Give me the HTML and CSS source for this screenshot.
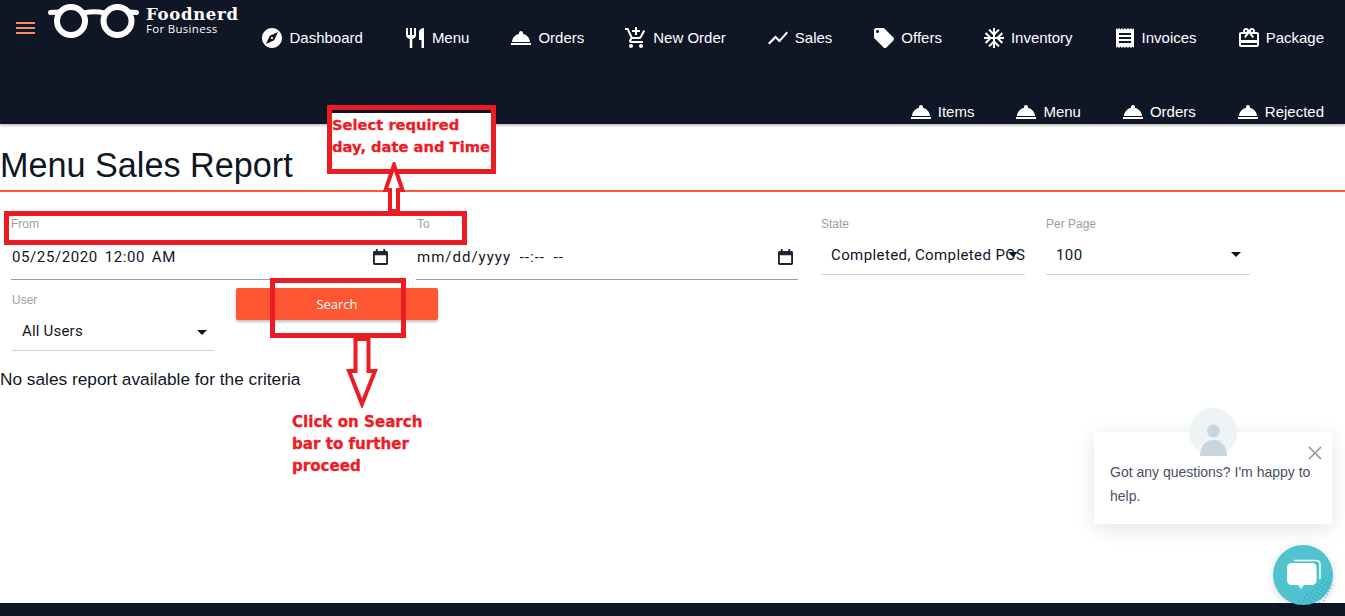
FILE: index.html
```html
<!DOCTYPE html>
<html lang="en">
<head>
<meta charset="utf-8">
<title>Menu Sales Report</title>
<link rel="stylesheet" href="styles.css">
</head>
<body>
<svg class="sprite" width="0" height="0" aria-hidden="true">
  <symbol id="i-explore" viewBox="0 0 24 24"><path d="M12 10.9c-.61 0-1.1.49-1.1 1.1s.49 1.1 1.1 1.1c.61 0 1.1-.49 1.1-1.1s-.49-1.1-1.1-1.1zM12 2C6.48 2 2 6.48 2 12s4.48 10 10 10 10-4.48 10-10S17.52 2 12 2zm2.19 12.19L6 18l3.81-8.19L18 6l-3.81 8.19z"/></symbol>
  <symbol id="i-menu" viewBox="0 0 24 24"><path d="M11 9H9V2H7v7H5V2H3v7c0 2.12 1.66 3.84 3.75 3.97V22h2.5v-9.03C11.34 12.84 13 11.12 13 9V2h-2v7zm5-3v8h2.5v8H21V2c-2.76 0-5 2.24-5 4z"/></symbol>
  <symbol id="i-bell" viewBox="0 0 24 24"><path d="M2 17h20v2H2zm11.84-9.21c.1-.24.16-.51.16-.79 0-1.1-.9-2-2-2s-2 .9-2 2c0 .28.06.55.16.79C6.25 8.6 3.27 11.93 3 16h18c-.27-4.07-3.25-7.4-7.16-8.21z"/></symbol>
  <symbol id="i-cart" viewBox="0 0 24 24"><path d="M11 9h2V6h3V4h-3V1h-2v3H8v2h3v3zm-4 9c-1.1 0-1.99.9-1.99 2S5.9 22 7 22s2-.9 2-2-.9-2-2-2zm10 0c-1.1 0-1.99.9-1.99 2s.89 2 1.99 2 2-.9 2-2-.9-2-2-2zm-9.83-3.25l.03-.12.9-1.63h7.45c.75 0 1.41-.41 1.75-1.03l3.86-7.01L19.42 4h-.01l-1.1 2-2.76 5H8.53l-.13-.27L6.16 6l-.95-2-.94-2H1v2h2l3.6 7.59-1.35 2.45c-.16.28-.25.61-.25.96 0 1.1.9 2 2 2h12v-2H7.42c-.13 0-.25-.11-.25-.25z"/></symbol>
  <symbol id="i-chart" viewBox="0 0 24 24"><path d="M3.5 18.49l6-6.01 4 4L22 6.92l-1.41-1.41-7.09 7.97-4-4L2 16.99z"/></symbol>
  <symbol id="i-tag" viewBox="0 0 24 24"><path d="M21.41 11.58l-9-9C12.05 2.22 11.55 2 11 2H4c-1.1 0-2 .9-2 2v7c0 .55.22 1.05.59 1.42l9 9c.36.36.86.58 1.41.58.55 0 1.05-.22 1.41-.59l7-7c.37-.36.59-.86.59-1.41 0-.55-.23-1.06-.59-1.42zM5.5 7C4.67 7 4 6.33 4 5.5S4.67 4 5.5 4 7 4.67 7 5.5 6.33 7 5.5 7z"/></symbol>
  <symbol id="i-snow" viewBox="0 0 24 24"><path d="M22 11h-4.17l3.24-3.24-1.41-1.42L15 11h-2V9l4.66-4.66-1.42-1.41L13 6.17V2h-2v4.17L7.76 2.93 6.34 4.34 11 9v2H9L4.34 6.34 2.93 7.76 6.17 11H2v2h4.17l-3.24 3.24 1.41 1.42L9 13h2v2l-4.66 4.66 1.42 1.41L11 17.83V22h2v-4.17l3.24 3.24 1.42-1.41L13 15v-2h2l4.66 4.66 1.41-1.42L17.83 13H22z"/></symbol>
  <symbol id="i-receipt" viewBox="0 0 24 24"><path d="M18 17H6v-2h12v2zm0-4H6v-2h12v2zm0-4H6V7h12v2zM3 22l1.5-1.5L6 22l1.5-1.5L9 22l1.5-1.5L12 22l1.5-1.5L15 22l1.5-1.5L18 22l1.5-1.5L21 22V2l-1.5 1.5L18 2l-1.5 1.5L15 2l-1.5 1.5L12 2l-1.5 1.5L9 2 7.5 3.5 6 2 4.5 3.5 3 2v20z"/></symbol>
  <symbol id="i-gift" viewBox="0 0 24 24"><path d="M20 6h-2.18c.11-.31.18-.65.18-1 0-1.66-1.34-3-3-3-1.05 0-1.96.54-2.5 1.35l-.5.67-.5-.68C10.96 2.54 10.05 2 9 2 7.34 2 6 3.34 6 5c0 .35.07.69.18 1H4c-1.11 0-1.99.89-1.99 2L2 19c0 1.11.89 2 2 2h16c1.11 0 2-.89 2-2V8c0-1.11-.89-2-2-2zm-5-2c.55 0 1 .45 1 1s-.45 1-1 1-1-.45-1-1 .45-1 1-1zM9 4c.55 0 1 .45 1 1s-.45 1-1 1-1-.45-1-1 .45-1 1-1zm11 15H4v-2h16v2zm0-5H4V8h5.08L7 10.83 8.62 12 11 8.76l1-1.36 1 1.36L15.38 12 17 10.83 14.92 8H20v6z"/></symbol>
  <symbol id="i-calendar" viewBox="0 0 16 17"><path d="M3 0h2v2h6V0h2v2h1.500C15.300 2 16 2.700 16 3.500v12c0 .8-.7 1.500-1.500 1.500h-13C.7 17 0 16.300 0 15.500v-12C0 2.700.7 2 1.500 2H3zM2 6.500V15h12V6.500z"/></symbol>
</svg>

<div class="page">
  <header class="header">
    <div class="top-row">
      <div class="brand">
        <div class="burger"><span></span><span></span><span></span></div>
        <svg class="glasses" viewBox="0 0 91 34" width="91" height="34" aria-hidden="true">
          <circle cx="23" cy="17" r="14" />
          <circle cx="69.500" cy="17" r="14" />
          <path class="glasses-bridge" d="M36 9c6.500-1.500 14-1.500 20.500 0" />
          <path class="glasses-arm" d="M12 8 2.500 8.500M80.500 8 88.500 8.500" />
        </svg>
        <div class="brand-text">
          <span class="brand-name">Foodnerd</span>
          <span class="brand-sub">For Business</span>
        </div>
      </div>
      <nav class="nav nav--main">
        <a class="nav-item"><svg class="icon"><use href="#i-explore"/></svg>Dashboard</a>
        <a class="nav-item"><svg class="icon"><use href="#i-menu"/></svg>Menu</a>
        <a class="nav-item"><svg class="icon"><use href="#i-bell"/></svg>Orders</a>
        <a class="nav-item"><svg class="icon"><use href="#i-cart"/></svg>New Order</a>
        <a class="nav-item"><svg class="icon"><use href="#i-chart"/></svg>Sales</a>
        <a class="nav-item"><svg class="icon"><use href="#i-tag"/></svg>Offers</a>
        <a class="nav-item"><svg class="icon"><use href="#i-snow"/></svg>Inventory</a>
        <a class="nav-item"><svg class="icon"><use href="#i-receipt"/></svg>Invoices</a>
        <a class="nav-item"><svg class="icon"><use href="#i-gift"/></svg>Package</a>
      </nav>
    </div>
    <nav class="nav nav--sub">
      <a class="nav-item"><svg class="icon"><use href="#i-bell"/></svg>Items</a>
      <a class="nav-item"><svg class="icon"><use href="#i-bell"/></svg>Menu</a>
      <a class="nav-item"><svg class="icon"><use href="#i-bell"/></svg>Orders</a>
      <a class="nav-item"><svg class="icon"><use href="#i-bell"/></svg>Rejected</a>
    </nav>
  </header>

  <main class="main">
    <h1 class="title">Menu Sales Report</h1>
    <form class="filters">
      <div class="filter-row">
        <div class="field field--date">
          <span class="field-label">From</span>
          <div class="date-input"><span>05/25/2020 12:00 AM</span><svg class="calendar"><use href="#i-calendar"/></svg></div>
        </div>
        <div class="field field--date field--to">
          <span class="field-label">To</span>
          <div class="date-input"><span>mm/dd/yyyy --:-- --</span><svg class="calendar"><use href="#i-calendar"/></svg></div>
        </div>
        <div class="field field--select field--state">
          <span class="field-label">State</span>
          <div class="select"><span class="select-value">Completed, Completed POS</span><i class="caret"></i></div>
        </div>
        <div class="field field--select field--page">
          <span class="field-label">Per Page</span>
          <div class="select"><span class="select-value">100</span><i class="caret"></i></div>
        </div>
      </div>
      <div class="filter-row filter-row--second">
        <div class="field field--select field--user">
          <span class="field-label">User</span>
          <div class="select"><span class="select-value">All Users</span><i class="caret"></i></div>
        </div>
        <button class="search-btn" type="button">Search</button>
      </div>
    </form>
    <p class="empty">No sales report available for the criteria</p>
  </main>

  <footer class="footer"></footer>

  <div class="note note--select">
    <p class="note-text">Select required<br>day, date and Time</p>
  </div>
  <div class="note note--range"></div>
  <div class="note note--search"></div>
  <svg class="arrow arrow--up" viewBox="0 0 24 50" width="24" height="50" aria-hidden="true">
    <path d="M8 49V28H3.500L12 3l8.500 25H16v21z"/>
  </svg>
  <svg class="arrow arrow--down" viewBox="0 0 32 70" width="32" height="70" aria-hidden="true">
    <path d="M9.500 1v32H3l13 33 13-33h-6.500V1z"/>
  </svg>
  <p class="note-text note-text--free">Click on Search<br>bar to further<br>proceed</p>

  <aside class="chat-card">
    <svg class="chat-avatar" viewBox="0 0 48 48" width="48" height="48" aria-hidden="true">
      <circle cx="24" cy="24" r="24" fill="#eef3f5"/>
      <circle cx="24.500" cy="23" r="6.500" fill="#c8d6e0"/>
      <path d="M11 48c0-10 6-16 13.500-16S38 38 38 48z" fill="#c8d6e0"/>
    </svg>
    <svg class="chat-close" viewBox="0 0 14 14" width="14" height="14" aria-hidden="true">
      <path d="M1 1l12 12M13 1 1 13"/>
    </svg>
    <p class="chat-text">Got any questions? I'm happy to help.</p>
  </aside>
  <div class="chat-launcher">
    <svg viewBox="0 0 60 60" width="60" height="60" aria-hidden="true">
      <defs>
        <pattern id="chat-dots" width="3.500" height="3.500" patternUnits="userSpaceOnUse" patternTransform="rotate(30)">
          <circle cx="1.750" cy="1.750" r=".6" fill="#1f7fb8"/>
        </pattern>
      </defs>
      <circle cx="30" cy="30" r="30" fill="#4fc4cf"/>
      <path d="M60 25 20 60h22a20 20 0 0 0 18-20z" fill="url(#chat-dots)"/>
      <path d="M21 15.500h22c2.500 0 4 1.500 4 4V34" fill="none" stroke="#fff" stroke-width="1.500"/>
      <path d="M19 18h20c3 0 4.500 2 4.500 4.500V35c0 3-2 5-4.500 5h-8l-3 4-3-4h-6c-3 0-5-2-5-5V22.500C14 20 16 18 19 18z" fill="#fff"/>
    </svg>
  </div>
</div>
</body>
</html>
```
FILE: styles.css
```css
* { box-sizing: border-box; }

html, body {
  margin: 0;
  padding: 0;
  background: #fff;
}

body {
  font-family: "Liberation Sans", Arial, sans-serif;
  color: #0f1626;
}

.sprite { position: absolute; }

.page {
  position: relative;
  display: flex;
  flex-direction: column;
  width: 1345px;
  height: 616px;
  overflow: hidden;
}

/* Header */
.header {
  display: flex;
  flex-direction: column;
  height: 124px;
  padding-right: 21px;
  background: #0f1626;
  box-shadow: 0 1px 3px rgba(0, 0, 0, .35);
}

.top-row {
  display: flex;
  justify-content: space-between;
  height: 61px;
  margin-right: -21px;
  padding-right: 21px;
  border-bottom: 1px solid #0d121c;
}

.brand { display: flex; align-items: flex-start; }

.burger {
  display: flex;
  flex-direction: column;
  gap: 3px;
  width: 19px;
  margin: 22px 0 0 16px;
}

.burger span {
  height: 2px;
  background: #f98a68;
}

.glasses {
  margin: 4px 0 0 13px;
  fill: none;
  stroke: #fff;
  stroke-width: 6;
  stroke-linecap: round;
}

.glasses-bridge { stroke-width: 5; }

.glasses-arm { stroke-width: 5; }

.brand-text {
  display: flex;
  flex-direction: column;
  margin: 7px 0 0 7px;
  color: #fff;
}

.brand-name {
  font-family: "DejaVu Serif", serif;
  font-size: 16.500px;
  font-weight: 700;
  line-height: 16px;
  letter-spacing: .7px;
  white-space: nowrap;
}

.brand-sub {
  font-family: "Open Sans", sans-serif;
  font-size: 11.500px;
  line-height: 12px;
  letter-spacing: .3px;
  white-space: nowrap;
}

.nav { display: flex; gap: 40px; }

.nav--main { margin-top: 26px; align-self: flex-start; }

.nav--sub { flex: 1; justify-content: flex-end; align-items: flex-end; }

.nav-item {
  display: flex;
  align-items: center;
  gap: 5px;
  height: 24px;
  padding-bottom: 2px;
  color: #fff;
  font-size: 15px;
}

.icon {
  width: 24px;
  height: 24px;
  margin-bottom: -2px;
  fill: #fff;
}

/* Main */
.main { flex: 1; }

.title {
  margin: 0;
  padding: 22px 0 6px;
  border-bottom: 2px solid #ff5733;
  font-size: 34.200px;
  font-weight: 400;
  line-height: 38px;
}

.filters { padding: 25px 0 0 11px; }

.filter-row { display: flex; align-items: flex-start; }

.filter-row--second { margin-top: 8px; }

.field-label {
  display: block;
  height: 14px;
  color: #9e9e9e;
  font-size: 12px;
  line-height: 14px;
}

.field--date { width: 380px; }

.field--to { margin-left: 25px; width: 382px; }

.field--to .field-label { padding-left: 1px; }

.date-input {
  display: flex;
  align-items: center;
  justify-content: space-between;
  height: 41px;
  margin-top: 8px;
  padding: 0 3px 5px 1px;
  border-bottom: 1px solid #9e9e9e;
  font-family: Roboto, sans-serif;
  font-size: 15px;
  letter-spacing: .6px;
  word-spacing: 2.500px;
  white-space: nowrap;
}

.field--to .date-input {
  padding-right: 5px;
  letter-spacing: 1px;
  word-spacing: 4px;
}

.calendar {
  width: 15px;
  height: 16px;
  fill: #1d2433;
}

.field--select { width: 204px; }

.field--state { margin-left: 23px; }

.field--page { margin-left: 21px; }

.field--user { margin-left: 1px; width: 202px; padding-top: 5px; }

.select {
  position: relative;
  height: 36px;
  margin-top: 8px;
  padding: 0 0 4px 10px;
  border-bottom: 1px solid #d4d4d4;
  overflow: hidden;
  font-family: Roboto, sans-serif;
  font-size: 15px;
  letter-spacing: .4px;
  line-height: 32px;
  white-space: nowrap;
}

.field--user .select {
  margin-top: 10px;
  height: 34px;
  letter-spacing: .2px;
  line-height: 29px;
}

.select-value { display: block; overflow: hidden; }

.caret {
  position: absolute;
  top: 13px;
  right: 7px;
  border-top: 5px solid #0f1626;
  border-left: 5px solid transparent;
  border-right: 5px solid transparent;
}

.field--page .caret { right: 9px; }

.search-btn {
  width: 202px;
  height: 32px;
  margin-left: 22px;
  border: 0;
  border-radius: 2px;
  background: #ff5733;
  box-shadow: 0 2px 3px rgba(0, 0, 0, .25);
  color: #fff;
  font-family: "Open Sans", sans-serif;
  font-size: 13px;
}

.empty {
  margin: 18px 0 0;
  font-size: 17.280px;
  line-height: 20px;
}

.footer { height: 13px; background: #0f1626; }

/* Annotations drawn over the page */
.note {
  position: absolute;
  border: 5px solid #ed1c24;
}

.note--select {
  left: 327px;
  top: 105px;
  width: 169px;
  height: 69px;
  background: linear-gradient(#0f1626 3px, #fff 3px);
}

.note--range {
  left: 4px;
  top: 211px;
  width: 463px;
  height: 34px;
}

.note--search {
  left: 270px;
  top: 278px;
  width: 136px;
  height: 60px;
}

.note-text {
  margin: 0;
  color: #ed1c24;
  font-family: "DejaVu Sans", sans-serif;
  font-size: 14.700px;
  font-weight: 700;
  line-height: 22px;
  white-space: nowrap;
  -webkit-text-stroke: .3px #ed1c24;
}

.note--select .note-text { margin-top: 4px; }

.note-text--free {
  position: absolute;
  left: 292px;
  top: 411px;
  font-size: 15.100px;
}

.arrow {
  position: absolute;
  fill: #fff;
  stroke: #ed1c24;
  stroke-width: 4;
}

.arrow--up { left: 382px; top: 162px; }

.arrow--down { left: 346px; top: 338px; }

/* Chat widget */
.chat-card {
  position: absolute;
  left: 1094px;
  top: 432px;
  width: 238px;
  height: 92px;
  padding: 28px 16px 0;
  border-radius: 4px;
  background: #fff;
  box-shadow: 0 4px 20px rgba(15, 22, 38, .12);
}

.chat-avatar { position: absolute; left: 95px; top: -24px; }

.chat-close {
  position: absolute;
  right: 10px;
  top: 14px;
  fill: none;
  stroke: #8c919c;
  stroke-width: 1.500;
}

.chat-text {
  margin: 0;
  color: #4a5063;
  font-size: 14px;
  line-height: 24px;
}

.chat-launcher {
  position: absolute;
  left: 1273px;
  top: 545px;
  width: 60px;
  height: 60px;
  border-radius: 50%;
  box-shadow: 0 2px 10px rgba(15, 22, 38, .15);
}

.chat-launcher svg { display: block; }
```
